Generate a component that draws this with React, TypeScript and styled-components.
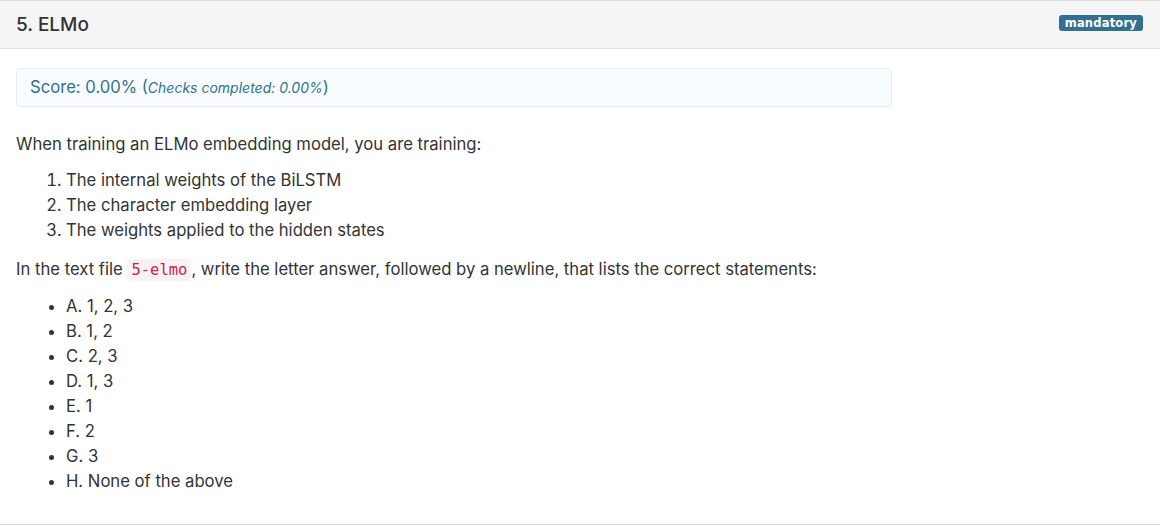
import styled, { createGlobalStyle } from 'styled-components'

const GlobalStyle = createGlobalStyle`
    body {
        margin: 0;
        background: #fff;
        font-family: Inter, "Noto Sans", "Liberation Sans", sans-serif;
        color: #333;
    }
`

const answers = [
    'A. 1, 2, 3',
    'B. 1, 2',
    'C. 2, 3',
    'D. 1, 3',
    'E. 1',
    'F. 2',
    'G. 3',
    'H. None of the above',
]

const statements = [
    'The internal weights of the BiLSTM',
    'The character embedding layer',
    'The weights applied to the hidden states',
]

const App = () => {
    return (
        <>
            <GlobalStyle />
            <Panel>
                <Header>
                    <Title>5. ELMo</Title>
                    <Badge>mandatory</Badge>
                </Header>
                <Body>
                    <ScoreBox>
                        Score: 0.00% (<Checks>Checks completed: 0.00%</Checks>)
                    </ScoreBox>
                    <Text $gap={11}>When training an ELMo embedding model, you are training:</Text>
                    <Numbered>
                        {statements.map(s => <Item key={s}>{s}</Item>)}
                    </Numbered>
                    <Text $gap={11}>
                        In the text file <Code>5-elmo</Code>, write the letter answer, followed by a newline, that lists the correct statements:
                    </Text>
                    <Bullets>
                        {answers.map(a => <Item key={a}>{a}</Item>)}
                    </Bullets>
                </Body>
            </Panel>
        </>
    )
}

const Panel = styled.div`
    border-top: 1px solid #ddd;
    border-bottom: 1px solid #ddd;
    background: #fff;
`

const Header = styled.div`
    display: flex;
    align-items: center;
    justify-content: space-between;
    height: 47px;
    padding: 0 17px 0 16px;
    background: #f5f5f5;
    border-bottom: 1px solid #ddd;
`

const Title = styled.h3`
    margin: 0;
    font-size: 19px;
    font-weight: 500;
    color: #333;
`

const Badge = styled.span`
    background: #31708f;
    color: #fff;
    font-family: "DejaVu Sans", "Liberation Sans", sans-serif;
    font-weight: 700;
    font-size: 11.5px;
    line-height: 16px;
    letter-spacing: 0.2px;
    padding: 0 6px;
    border-radius: 3px;
    margin-top: -4px;
`

const Body = styled.div`
    padding: 19px 16px 18px;
    font-size: 16.65px;
    line-height: 25px;
`

const ScoreBox = styled.div`
    box-sizing: border-box;
    max-width: 876px;
    padding: 8px 13px;
    line-height: 20px;
    color: #31708f;
    background: #f8fcfe;
    border: 1px solid #e6eef1;
    border-radius: 4px;
    margin-bottom: 25px;
`

const Checks = styled.em`
    font-size: 14px;
`

const Text = styled.p<{ $gap?: number }>`
    margin: 0 0 ${p => p.$gap ?? 12}px;
`

const Code = styled.code`
    font-family: "DejaVu Sans Mono", "Liberation Mono", monospace;
    font-size: 15.5px;
    color: #c7254e;
    background: #f9f2f4;
    padding: 2px 4px;
    border-radius: 4px;
`

const Numbered = styled.ol`
    margin: 0 0 14px;
    padding-left: 50px;
`

const Bullets = styled.ul`
    margin: 0 0 12px;
    padding-left: 50px;
`

const Item = styled.li``

export default App
